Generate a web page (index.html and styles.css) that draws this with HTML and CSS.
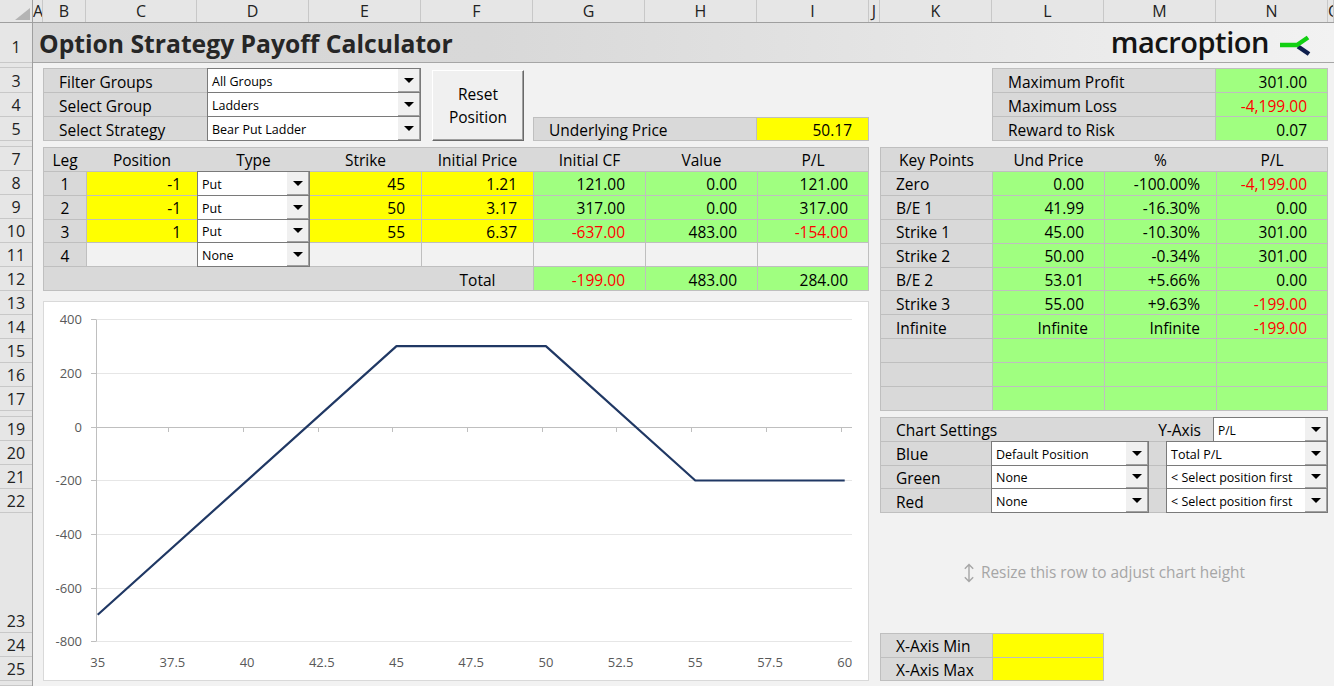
FILE: index.html
```html
<!DOCTYPE html>
<html lang="en">
<head>
<meta charset="utf-8">
<title>Option Strategy Payoff Calculator</title>
<link rel="stylesheet" href="styles.css">
</head>
<body>
<div class="sheet">
  <div class="corner"><svg width="32" height="22" viewBox="0 0 32 22"><polygon points="15,20 30,20 30,8" fill="#b4b4b4"/></svg></div>
  <div class="colheads">
    <div>A</div><div>B</div><div>C</div><div>D</div><div>E</div><div>F</div><div>G</div><div>H</div><div>I</div><div>J</div><div>K</div><div>L</div><div>M</div><div>N</div><div>O</div>
  </div>
  <div class="rowheads">
    <div class="rh1">1</div><div></div><div>3</div><div>4</div><div>5</div><div></div>
    <div>7</div><div>8</div><div>9</div><div>10</div><div>11</div><div>12</div><div>13</div><div>14</div><div>15</div><div>16</div><div>17</div><div></div>
    <div>19</div><div>20</div><div>21</div><div>22</div><div>23</div><div>24</div><div>25</div><div></div>
  </div>

  <header class="titlebar">
    <h1 class="title">Option Strategy Payoff Calculator</h1>
    <div class="logo">
      <span class="logo-text">macroption</span>
      <svg class="logo-mark" width="34" height="24" viewBox="0 0 34 24">
        <path d="M19 13.5 L30 21" stroke="#0f1f4d" stroke-width="4.5" fill="none"/>
        <path d="M1 12 H18 L29 4.5" stroke="#12d012" stroke-width="4.5" fill="none" stroke-linejoin="round"/>
      </svg>
    </div>
  </header>

  <section class="filters">
    <div class="c g lab">Filter Groups</div>
    <div class="dd"><span class="v">All Groups</span><span class="b"></span></div>
    <div class="c g lab">Select Group</div>
    <div class="dd"><span class="v">Ladders</span><span class="b"></span></div>
    <div class="c g lab">Select Strategy</div>
    <div class="dd"><span class="v">Bear Put Ladder</span><span class="b"></span></div>
  </section>

  <div class="reset-cell"><button class="reset" type="button">Reset<br>Position</button></div>

  <section class="under">
    <div class="c g lab">Underlying Price</div>
    <div class="c y num">50.17</div>
  </section>

  <section class="summary">
    <div class="c g lab">Maximum Profit</div><div class="c gr num n20">301.00</div>
    <div class="c g lab">Maximum Loss</div><div class="c gr num n20 neg">-4,199.00</div>
    <div class="c g lab">Reward to Risk</div><div class="c gr num n20">0.07</div>
  </section>

  <section class="legs">
    <div class="thead"><span>Leg</span><span>Position</span><span>Type</span><span>Strike</span><span>Initial Price</span><span>Initial CF</span><span>Value</span><span>P/L</span></div>

    <div class="c g ctr">1</div><div class="c y num">-1</div>
    <div class="dd"><span class="v">Put</span><span class="b"></span></div>
    <div class="c y num">45</div><div class="c y num">1.21</div>
    <div class="c gr num n20">121.00</div><div class="c gr num n20">0.00</div><div class="c gr num n20">121.00</div>

    <div class="c g ctr">2</div><div class="c y num">-1</div>
    <div class="dd"><span class="v">Put</span><span class="b"></span></div>
    <div class="c y num">50</div><div class="c y num">3.17</div>
    <div class="c gr num n20">317.00</div><div class="c gr num n20">0.00</div><div class="c gr num n20">317.00</div>

    <div class="c g ctr">3</div><div class="c y num">1</div>
    <div class="dd"><span class="v">Put</span><span class="b"></span></div>
    <div class="c y num">55</div><div class="c y num">6.37</div>
    <div class="c gr num n20 neg">-637.00</div><div class="c gr num n20">483.00</div><div class="c gr num n20 neg">-154.00</div>

    <div class="c g ctr">4</div><div class="c e"></div>
    <div class="dd"><span class="v">None</span><span class="b"></span></div>
    <div class="c e"></div><div class="c e"></div>
    <div class="c e"></div><div class="c e"></div><div class="c e"></div>

    <div class="c g total"><span>Total</span></div>
    <div class="c gr num n20 neg">-199.00</div><div class="c gr num n20">483.00</div><div class="c gr num n20">284.00</div>
  </section>

  <section class="kp">
    <div class="khead"><span>Key Points</span><span>Und Price</span><span>%</span><span>P/L</span></div>
    <div class="c g lab">Zero</div><div class="c gr num n20">0.00</div><div class="c gr num">-100.00%</div><div class="c gr num n20 neg">-4,199.00</div>
    <div class="c g lab">B/E 1</div><div class="c gr num n20">41.99</div><div class="c gr num">-16.30%</div><div class="c gr num n20">0.00</div>
    <div class="c g lab">Strike 1</div><div class="c gr num n20">45.00</div><div class="c gr num">-10.30%</div><div class="c gr num n20">301.00</div>
    <div class="c g lab">Strike 2</div><div class="c gr num n20">50.00</div><div class="c gr num">-0.34%</div><div class="c gr num n20">301.00</div>
    <div class="c g lab">B/E 2</div><div class="c gr num n20">53.01</div><div class="c gr num">+5.66%</div><div class="c gr num n20">0.00</div>
    <div class="c g lab">Strike 3</div><div class="c gr num n20">55.00</div><div class="c gr num">+9.63%</div><div class="c gr num n20 neg">-199.00</div>
    <div class="c g lab">Infinite</div><div class="c gr num">Infinite</div><div class="c gr num">Infinite</div><div class="c gr num n20 neg">-199.00</div>
    <div class="c g"></div><div class="c gr"></div><div class="c gr"></div><div class="c gr"></div>
    <div class="c g"></div><div class="c gr"></div><div class="c gr"></div><div class="c gr"></div>
    <div class="c g"></div><div class="c gr"></div><div class="c gr"></div><div class="c gr"></div>
  </section>

  <figure class="chart">
    <svg class="plot" viewBox="0 0 824 378" preserveAspectRatio="none">
      <g class="grid">
        <line x1="52" y1="17.5" x2="808" y2="17.5"/>
        <line x1="52" y1="71.5" x2="808" y2="71.5"/>
        <line x1="52" y1="178.5" x2="808" y2="178.5"/>
        <line x1="52" y1="232.5" x2="808" y2="232.5"/>
        <line x1="52" y1="286.5" x2="808" y2="286.5"/>
        <line x1="52" y1="339.5" x2="808" y2="339.5"/>
      </g>
      <g class="axis">
        <line x1="52.5" y1="17.5" x2="52.5" y2="339.5"/>
        <line x1="52" y1="125.5" x2="808" y2="125.5"/>
        <line x1="47" y1="17.5" x2="52" y2="17.5"/>
        <line x1="47" y1="71.5" x2="52" y2="71.5"/>
        <line x1="47" y1="125.5" x2="52" y2="125.5"/>
        <line x1="47" y1="178.5" x2="52" y2="178.5"/>
        <line x1="47" y1="232.5" x2="52" y2="232.5"/>
        <line x1="47" y1="286.5" x2="52" y2="286.5"/>
        <line x1="47" y1="339.5" x2="52" y2="339.5"/>
        <line x1="124.5" y1="126" x2="124.5" y2="130"/>
        <line x1="199.5" y1="126" x2="199.5" y2="130"/>
        <line x1="274.5" y1="126" x2="274.5" y2="130"/>
        <line x1="348.5" y1="126" x2="348.5" y2="130"/>
        <line x1="423.5" y1="126" x2="423.5" y2="130"/>
        <line x1="498.5" y1="126" x2="498.5" y2="130"/>
        <line x1="572.5" y1="126" x2="572.5" y2="130"/>
        <line x1="647.5" y1="126" x2="647.5" y2="130"/>
        <line x1="722.5" y1="126" x2="722.5" y2="130"/>
        <line x1="797.5" y1="126" x2="797.5" y2="130"/>
      </g>
      <g class="ylab">
        <text x="38" y="22">400</text>
        <text x="38" y="76">200</text>
        <text x="38" y="130">0</text>
        <text x="38" y="183">-200</text>
        <text x="38" y="237">-400</text>
        <text x="38" y="291">-600</text>
        <text x="38" y="344">-800</text>
      </g>
      <g class="xlab">
        <text x="53.7" y="365">35</text>
        <text x="128.4" y="365">37.5</text>
        <text x="203.1" y="365">40</text>
        <text x="277.8" y="365">42.5</text>
        <text x="352.5" y="365">45</text>
        <text x="427.2" y="365">47.5</text>
        <text x="501.9" y="365">50</text>
        <text x="576.6" y="365">52.5</text>
        <text x="651.3" y="365">55</text>
        <text x="726" y="365">57.5</text>
        <text x="800.7" y="365">60</text>
      </g>
      <polyline class="series" points="53.7,312.8 352.5,44.1 501.9,44.1 651.3,178.5 800.7,178.5"/>
    </svg>
  </figure>

  <section class="settings">
    <div class="srow top">
      <div class="c g lab spread"><span>Chart Settings</span><span>Y-Axis</span></div>
      <div class="dd"><span class="v sm">P/L</span><span class="b"></span></div>
    </div>
    <div class="srow">
      <div class="c g lab">Blue</div>
      <div class="dd"><span class="v">Default Position</span><span class="b"></span></div>
      <div class="g"></div>
      <div class="dd"><span class="v">Total P/L</span><span class="b"></span></div>
    </div>
    <div class="srow">
      <div class="c g lab">Green</div>
      <div class="dd"><span class="v">None</span><span class="b"></span></div>
      <div class="g"></div>
      <div class="dd"><span class="v">&lt; Select position first</span><span class="b"></span></div>
    </div>
    <div class="srow">
      <div class="c g lab">Red</div>
      <div class="dd"><span class="v">None</span><span class="b"></span></div>
      <div class="g"></div>
      <div class="dd"><span class="v">&lt; Select position first</span><span class="b"></span></div>
    </div>
  </section>

  <div class="resize-note">
    <svg width="12" height="20" viewBox="0 0 12 20"><path d="M6 1.5V18.5M1.8 5.7L6 1.5L10.2 5.7M1.8 14.3L6 18.5L10.2 14.3" stroke="#a6a6a6" stroke-width="1.4" fill="none"/></svg>
    <span>Resize this row to adjust chart height</span>
  </div>

  <section class="xaxis">
    <div class="c g lab">X-Axis Min</div><div class="c y"></div>
    <div class="c g lab">X-Axis Max</div><div class="c y"></div>
  </section>
</div>
</body>
</html>
```

FILE: styles.css
```css
* { box-sizing: border-box; }

html, body {
  margin: 0;
  padding: 0;
}

body {
  font-family: "Open Sans", "Noto Sans", sans-serif;
  font-size: 15.5px;
  line-height: 20px;
  color: #000;
  background: #f2f2f2;
  overflow: hidden;
}

.sheet {
  --cols: 10px 43px 111px 112px 112px 112px 112px 112px 112px 11px 112px 112px 112px 112px 1fr;
  --rows: 40px 5px 25px 24px 24px 6px repeat(11, 24px) 6px repeat(4, 24px) 120px 24px 24px 1fr;
  display: grid;
  grid-template-columns: 33px var(--cols);
  grid-template-rows: 23px var(--rows);
  width: 1334px;
  height: 686px;
}

/* ---------- spreadsheet headers ---------- */
.corner {
  grid-column: 1;
  grid-row: 1;
  background: #e6e6e6;
  border-right: 1px solid #9f9f9f;
  border-bottom: 1px solid #9f9f9f;
}
.corner svg { display: block; }

.colheads {
  grid-column: 2 / -1;
  grid-row: 1;
  display: grid;
  grid-template-columns: var(--cols);
  background: #e6e6e6;
  border-bottom: 1px solid #9f9f9f;
}
.colheads div {
  border-right: 1px solid #c8c8c8;
  text-align: center;
  font-size: 16px;
  line-height: 22px;
  color: #222;
  overflow: hidden;
}

.rowheads {
  grid-column: 1;
  grid-row: 2 / -1;
  display: grid;
  grid-template-rows: var(--rows);
  background: #e6e6e6;
  border-right: 1px solid #9f9f9f;
}
.rowheads div {
  border-bottom: 1px solid #c8c8c8;
  display: flex;
  align-items: flex-end;
  justify-content: center;
  font-size: 16px;
  line-height: 22px;
  color: #222;
  overflow: hidden;
}
.rowheads .rh1 { padding-bottom: 4px; }

/* ---------- title bar ---------- */
.titlebar {
  grid-column: 2 / -1;
  grid-row: 2;
  display: flex;
  align-items: center;
  justify-content: space-between;
  padding: 3px 21px 0 6px;
  background: linear-gradient(90deg, #d6d6d6 0%, #d8d8d8 35%, #f2f2f2 100%);
  border-bottom: 1px solid #a6a6a6;
}
.title {
  margin: 0;
  font-size: 24.7px;
  line-height: 32px;
  font-weight: 700;
  color: #262626;
}
.logo {
  display: flex;
  align-items: center;
  gap: 10px;
}
.logo-text {
  font-size: 29px;
  font-weight: 600;
  letter-spacing: -0.45px;
  color: #141414;
  line-height: 1;
  padding-bottom: 5px;
}
.logo-mark { display: block; margin-top: 1px; }

/* ---------- generic cells ---------- */
.c {
  display: flex;
  align-items: center;
  padding-top: 2px;
  white-space: nowrap;
  overflow: hidden;
  min-width: 0;
  min-height: 0;
}
.g { background: #d9d9d9; }
.y { background: #ffff00; }
.gr { background: #a0ff80; }
.e { background: #f2f2f2; }
.ctr { justify-content: center; }
.num { justify-content: flex-end; padding-right: 16px; }
.n20 { padding-right: 20px; }
.lab { padding-left: 15px; }
.neg { color: #ff0000; }

/* dropdown (data validation) */
.dd {
  display: flex;
  align-items: stretch;
  background: #fff;
  border: 1px solid #7a7a7a;
  margin: -1px;
  min-width: 0;
  min-height: 0;
  position: relative;
}
.dd .v {
  flex: 1;
  display: flex;
  align-items: center;
  padding: 3px 0 0 4px;
  font-size: 12.5px;
  line-height: 16px;
  white-space: nowrap;
  overflow: hidden;
}
.dd .v.sm { font-size: 12px; }
.dd .b {
  width: 22px;
  flex: none;
  background: #f0f0f0;
  border-right: 1px solid #a0a0a0;
  border-bottom: 1px solid #a0a0a0;
  display: flex;
  align-items: center;
  justify-content: center;
  padding-top: 1px;
}
.dd .b::after {
  content: "";
  border-left: 5px solid transparent;
  border-right: 5px solid transparent;
  border-top: 5px solid #000;
}

/* ---------- blocks ---------- */
.filters {
  grid-column: 3 / 7;
  grid-row: 4 / 7;
  display: grid;
  grid-template-columns: 163px 1fr;
  grid-template-rows: repeat(3, minmax(0, 1fr));
  gap: 1px;
  background: #bfbfbf;
  border: 1px solid #bfbfbf;
}

.reset-cell {
  grid-column: 7;
  grid-row: 4 / 7;
  display: flex;
  padding: 2px 9px 0 11px;
}
.reset {
  flex: 1;
  margin: 0;
  padding: 0;
  font-family: inherit;
  font-size: 15.5px;
  line-height: 23px;
  color: #000;
  background: #f0f0f0;
  border: 1px solid;
  border-color: #ffffff #696969 #696969 #ffffff;
  box-shadow: inset -1px -1px 0 #a0a0a0;
}

.under {
  grid-column: 8 / 11;
  grid-row: 6;
  display: grid;
  grid-template-columns: 1fr 111px;
  grid-template-rows: minmax(0, 1fr);
  gap: 1px;
  background: #bfbfbf;
  border: 1px solid #bfbfbf;
}

.summary {
  grid-column: 13 / 16;
  grid-row: 4 / 7;
  display: grid;
  grid-template-columns: 1fr 111px;
  grid-template-rows: repeat(3, minmax(0, 1fr));
  gap: 1px;
  background: #bfbfbf;
  border: 1px solid #bfbfbf;
}

.legs {
  --tcols: 42px 110px 111px 111px 111px 111px 111px 1fr;
  grid-column: 3 / 11;
  grid-row: 8 / 14;
  display: grid;
  grid-template-columns: var(--tcols);
  grid-template-rows: repeat(6, minmax(0, 1fr));
  gap: 1px;
  background: #bfbfbf;
  border: 1px solid #bfbfbf;
}
.thead, .khead {
  grid-column: 1 / -1;
  display: grid;
  column-gap: 1px;
  align-items: center;
  padding-top: 2px;
  background: #d9d9d9;
}
.thead { grid-template-columns: var(--tcols); }
.thead span, .khead span { text-align: center; white-space: nowrap; }
.total {
  grid-column: 1 / 6;
  justify-content: flex-end;
}
.total span { width: 111px; text-align: center; }

.kp {
  grid-column: 12 / 16;
  grid-row: 8 / 19;
  display: grid;
  grid-template-columns: 111px 111px 111px 1fr;
  grid-template-rows: repeat(11, minmax(0, 1fr));
  gap: 1px;
  background: #bfbfbf;
  border: 1px solid #bfbfbf;
}
.khead { grid-template-columns: 111px 111px 111px 1fr; }

.chart {
  grid-column: 3 / 11;
  grid-row: 14 / 27;
  margin: 10px 0 0 0;
  background: #fff;
  border: 1px solid #d9d9d9;
}
.plot { display: block; width: 100%; height: 100%; }
.plot .grid line { stroke: #e6e6e6; stroke-width: 1; }
.plot .axis line { stroke: #bfbfbf; stroke-width: 1; }
.plot text {
  font-family: "Open Sans", "Noto Sans", sans-serif;
  font-size: 13px;
  fill: #595959;
}
.plot .ylab text { text-anchor: end; }
.plot .xlab text { text-anchor: middle; }
.plot .series {
  fill: none;
  stroke: #203864;
  stroke-width: 2.2;
  stroke-linejoin: round;
}

.settings {
  grid-column: 12 / 16;
  grid-row: 20 / 24;
  display: grid;
  grid-template-rows: repeat(4, minmax(0, 1fr));
  gap: 1px;
  background: #bfbfbf;
  border: 1px solid #bfbfbf;
}
.srow {
  display: grid;
  grid-template-columns: 111px 156px 19px 1fr;
  grid-template-rows: minmax(0, 1fr);
  min-height: 0;
}
.srow.top { grid-template-columns: 1fr 113px; }
.spread { justify-content: space-between; padding-right: 13px; }

.resize-note {
  grid-column: 12 / 16;
  grid-row: 24;
  display: flex;
  align-items: center;
  justify-content: center;
  gap: 6px;
  font-size: 15.4px;
  color: #a6a6a6;
}
.resize-note svg { display: block; }

.xaxis {
  grid-column: 12 / 14;
  grid-row: 25 / 27;
  display: grid;
  grid-template-columns: 111px 1fr;
  grid-template-rows: repeat(2, minmax(0, 1fr));
  gap: 1px;
  background: #bfbfbf;
  border: 1px solid #bfbfbf;
}
```
